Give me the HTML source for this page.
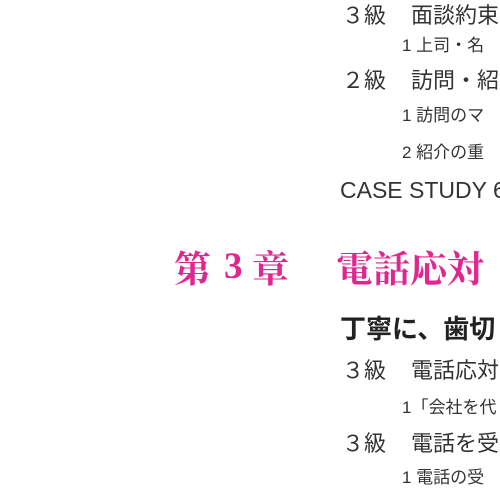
<!DOCTYPE html>
<html><head><meta charset="utf-8"><style>
html,body{margin:0;padding:0;width:500px;height:500px;overflow:hidden;background:#fff;}
#w{position:relative;width:500px;height:500px;overflow:hidden;}
.t{position:absolute;white-space:nowrap;color:#333;font-family:"Liberation Sans","Noto Sans CJK JP",sans-serif;line-height:1;}
.h{font-size:22px;left:342px;}
.h span{position:absolute;left:69px;top:0;}
.s{font-size:17px;left:402px;}
.p{position:absolute;white-space:nowrap;color:#e0268f;font-family:'Noto Serif CJK SC','Liberation Serif',serif;font-size:37px;line-height:1;font-weight:bold;top:248px;}
</style></head><body><div id="w">
<div class="t h" style="top:5px">３級<span>面談約束</span></div>
<div class="t s" style="top:37px">1 上司・名</div>
<div class="t h" style="top:70px">２級<span>訪問・紹</span></div>
<div class="t s" style="top:107px">1 訪問のマ</div>
<div class="t s" style="top:144px">2 紹介の重</div>
<div class="t" style="left:340px;top:179px;font-size:23px;">CASE STUDY 6</div>
<div class="p" style="left:174px;">第</div>
<div class="p" style="left:224px;font-family:'Liberation Serif',serif;">3</div>
<div class="p" style="left:252px;">章</div>
<div class="p" style="left:336px;">電話応対</div>
<div class="t" style="left:340px;top:316px;font-size:26px;font-weight:bold;color:#222;">丁寧に、歯切</div>
<div class="t h" style="top:360px">３級<span>電話応対</span></div>
<div class="t s" style="top:399px">1「会社を代</div>
<div class="t h" style="top:433px">３級<span>電話を受</span></div>
<div class="t s" style="top:469px">1 電話の受</div>
</div></body></html>
